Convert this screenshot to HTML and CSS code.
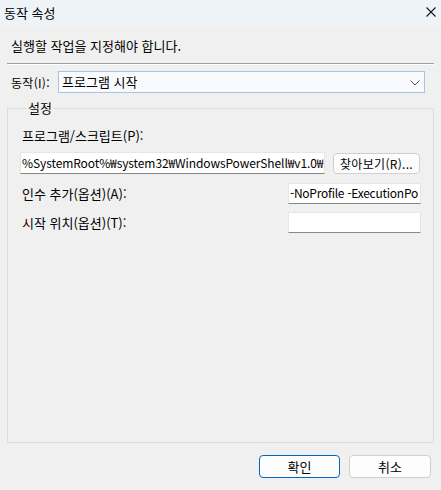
FILE: index.html
```html
<!DOCTYPE html>
<html lang="ko">
<head>
<meta charset="utf-8">
<title>동작 속성</title>
<link rel="stylesheet" href="styles.css">
</head>
<body>
<div class="window">
  <div class="titlebar">
    <span class="title">동작 속성</span>
    <svg class="close" width="10" height="10" viewBox="0 0 10 10"><path d="M0.5 0.5 L9.5 9.5 M9.5 0.5 L0.5 9.5" stroke="#1a1a1a" stroke-width="1.1" fill="none"/></svg>
  </div>
  <div class="content">
    <div class="instruction">실행할 작업을 지정해야 합니다.</div>
    <div class="sep"></div>
    <div class="action-row">
      <span class="label">동작(I):</span>
      <div class="combo">
        <span class="combo-text">프로그램 시작</span>
        <svg class="chev" width="10" height="6" viewBox="0 0 10 6"><path d="M0.5 0.5 L5 5 L9.5 0.5" stroke="#555" stroke-width="1" fill="none"/></svg>
      </div>
    </div>
    <fieldset class="group">
      <legend>설정</legend>
      <div class="field-label">프로그램/스크립트(P):</div>
      <div class="prog-row">
        <div class="textbox prog">%SystemRoot%₩system32₩WindowsPowerShell₩v1.0₩</div>
        <div class="button browse">찾아보기(R)...</div>
      </div>
      <div class="opt-row first">
        <span class="field-label inline">인수 추가(옵션)(A):</span>
        <div class="textbox short args">-NoProfile -ExecutionPo</div>
      </div>
      <div class="opt-row">
        <span class="field-label inline">시작 위치(옵션)(T):</span>
        <div class="textbox short"></div>
      </div>
    </fieldset>
    <div class="footer">
      <div class="button ok">확인</div>
      <div class="button">취소</div>
    </div>
  </div>
</div>
</body>
</html>
```

FILE: styles.css
```css
html, body {
  margin: 0;
  padding: 0;
}
body {
  width: 441px;
  height: 490px;
  background: #f0f0f0;
  font-family: "Noto Sans CJK KR", "Noto Sans", sans-serif;
  font-size: 13px;
  color: #000;
  overflow: hidden;
}
.window {
  width: 441px;
  height: 490px;
}
.titlebar {
  height: 27px;
  background: #eef3f8;
  display: flex;
  align-items: center;
  justify-content: space-between;
  padding: 0 5px 0 4px;
  box-sizing: border-box;
}
.title {
  line-height: 16px;
  margin-top: -2px;
}
.close {
  margin-top: -3px;
}
.content {
  padding: 0 7px;
}
.instruction {
  padding: 10px 0 0 4px;
  line-height: 18px;
  height: 18px;
}
.sep {
  margin-top: 8px;
  height: 1px;
  border-top: 1px solid #a0a0a0;
  background: #ffffff;
}
.action-row {
  margin-top: 6px;
  display: flex;
  align-items: center;
  height: 22px;
}
.label {
  width: 51px;
  padding-left: 4px;
  box-sizing: border-box;
  white-space: nowrap;
  font-size: 12px;
  letter-spacing: 0.3px;
}
.combo {
  width: 367px;
  height: 22px;
  box-sizing: border-box;
  border: 1px solid #a9c4de;
  background: #f8fafd;
  display: flex;
  align-items: center;
  justify-content: space-between;
  padding: 0 4px 0 3px;
}
.combo-text {
  line-height: 16px;
}
.chev {
  margin-top: 1px;
}
.group {
  margin: 7px 0 0 0;
  padding: 12px 12px 0 12px;
  border: 1px solid #dcdcdc;
  height: 343px;
  box-sizing: border-box;
  min-width: 0;
}
.group legend {
  padding: 0 2px;
  margin-left: 6px;
  line-height: 16px;
}
.field-label {
  line-height: 16px;
  padding-left: 2px;
}
.field-label.inline {
  flex: 1;
}
.prog-row {
  margin-top: 8px;
  display: flex;
  align-items: flex-start;
  gap: 8px;
}
.textbox {
  background: #fff;
  border: 1px solid #e6e6e6;
  border-bottom-color: #888;
  box-sizing: border-box;
  height: 22px;
  line-height: 19px;
  white-space: nowrap;
  overflow: hidden;
  padding: 0 2px;
  font-size: 12px;
}
.textbox.prog {
  width: 305px;
  padding-left: 1px;
  letter-spacing: -0.1px;
}
.textbox.short {
  width: 133px;
  height: 21px;
  line-height: 18px;
  padding-left: 1px;
}
.textbox.args {
  letter-spacing: -0.25px;
}
.button {
  box-sizing: border-box;
  height: 23px;
  width: 82px;
  border: 1px solid #d0d0d0;
  border-radius: 4px;
  background: #fdfdfd;
  display: flex;
  align-items: center;
  justify-content: center;
  line-height: 16px;
}
.button.browse {
  width: 87px;
  height: 21px;
  margin-top: 1px;
  white-space: nowrap;
  font-size: 12px;
  letter-spacing: 0.3px;
}
.opt-row {
  display: flex;
  align-items: center;
  margin-top: 8px;
}
.opt-row.first {
  margin-top: 9px;
}
.footer {
  display: flex;
  justify-content: flex-end;
  gap: 9px;
  margin-top: 12px;
  padding-right: 3px;
}
.button.ok {
  border-color: #0067c0;
  width: 81px;
}
```
